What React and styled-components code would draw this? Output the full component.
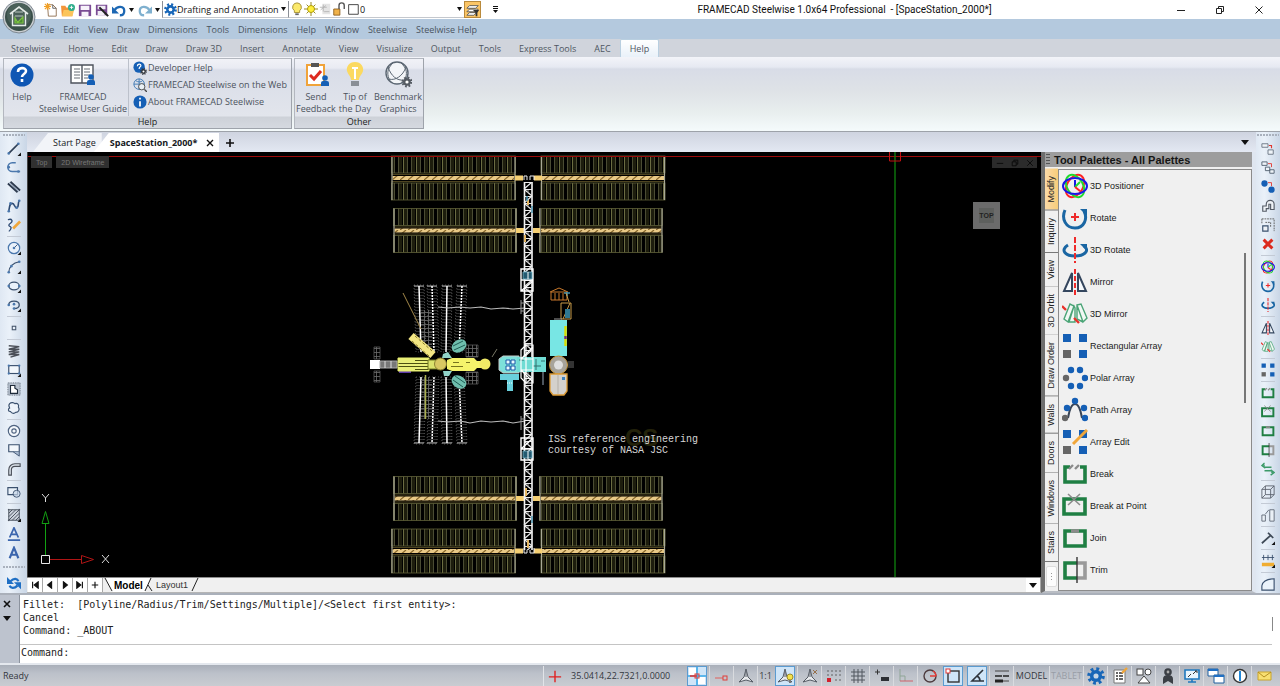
import React from 'react'
import styled, { createGlobalStyle, css } from 'styled-components'

const GlobalStyle = createGlobalStyle`
    * {
        box-sizing: border-box;
    }
    body {
        margin: 0;
        font-family: 'Open Sans', 'Noto Sans', sans-serif;
        font-size: 9px;
        color: #1e1e1e;
        background: #d3d8e2;
    }
    button, select, input {
        font: inherit;
        color: inherit;
        margin: 0;
        padding: 0;
        border: none;
        background: none;
        outline: none;
        appearance: none;
    }
`

const Window = styled.div`
    position: relative;
    height: 100vh;
    display: flex;
    flex-direction: column;
    overflow: hidden;
`

/* ---------- title bar ---------- */

const TitleBar = styled.header`
    height: 19px;
    flex: none;
    display: flex;
    align-items: center;
    padding: 0 2px 0 42px;
    background: white;
`

const QuickAccess = styled.div`
    display: flex;
    align-items: center;
    height: 18px;
`

const QuickButton = styled.button`
    width: ${({ $width }) => $width || '17px'};
    height: 17px;
    display: flex;
    align-items: center;
    justify-content: center;
    ${({ $on }) =>
        $on &&
        css`
            background: #fbc566;
            border: 1px solid #b98a3c;
        `}
`

const Combo = styled.div`
    display: flex;
    align-items: center;
    width: ${({ $width }) => $width};
    height: 17px;
    padding: 0 1px;
    border-left: 1px solid #8b8f96;
    border-bottom: 1px solid #c4c8ce;

    svg {
        flex: none;
    }

    select {
        flex: 1;
        min-width: 0;
        height: 15px;
        color: #111;
    }
`

const AppTitle = styled.h1`
    flex: 1;
    margin: 0;
    padding-left: 18px;
    text-align: center;
    font-family: Roboto, 'Open Sans', sans-serif;
    font-size: 10px;
    font-weight: normal;
    color: #111;
    white-space: nowrap;
`

const WindowButton = styled.button`
    width: 39px;
    height: 19px;
    display: flex;
    align-items: center;
    justify-content: center;
`

const AppButton = styled.button`
    position: absolute;
    left: 2px;
    top: 0;
    width: 34px;
    height: 34px;
    z-index: 2;
`

/* ---------- menu and ribbon ---------- */

const MenuBar = styled.nav`
    height: 20px;
    flex: none;
    display: flex;
    align-items: center;
    gap: 9px;
    padding-left: 40px;
    background: #b4c9de;

    button {
        color: #4a5460;
    }
`

const RibbonTabs = styled.div`
    height: 18px;
    flex: none;
    display: flex;
    padding-left: 2px;
    background: #d0d4dc;
`

const RibbonTab = styled.button`
    height: 18px;
    padding: 0 9px;
    color: #4e5661;
    white-space: nowrap;
    ${({ $active }) =>
        $active &&
        css`
            background: linear-gradient(#ffffff, #e9f1f9);
            border: 1px solid #b9cfe0;
            border-bottom: none;
            border-radius: 2px 2px 0 0;
        `}
`

const Ribbon = styled.section`
    height: 75px;
    flex: none;
    display: flex;
    gap: 2px;
    padding: 1px 3px 2px;
    border-bottom: 1px solid #9da2a9;
    background: linear-gradient(#f3f4f9 0, #e6e9f2 10px, #d8dce7 12px, #dfe3e7 35px, #e8eeee 55px, #f4fafb 73px);
`

const RibbonPanel = styled.section`
    display: flex;
    flex-direction: column;
    height: 71px;
    border: 1px solid #b3b7bf;
    border-right-color: #9ea3ab;
    border-bottom-color: #9ea3ab;
    background: linear-gradient(#f1f2f7 0, #e9ebf3 9px, #d9dde8 11px, #e2e5ec 57px, #cdd1d8 58px, #d5d9e0);
`

const PanelBody = styled.div`
    display: flex;
    height: 57px;
    color: #4c535d;
`

const PanelName = styled.h2`
    margin: 0;
    font-size: 9px;
    font-weight: normal;
    line-height: 12px;
    text-align: center;
    color: #1c1f24;
`

const BigButton = styled.button`
    width: ${({ $width }) => $width};
    display: flex;
    flex-direction: column;
    align-items: center;
    gap: 2px;
    padding-top: 2px;
    line-height: 12px;
    white-space: nowrap;
`

const LinkList = styled.ul`
    list-style: none;
    margin: 0 0 0 2px;
    padding: 0 4px;
    border-left: 1px solid #bcc1cb;
`

const RibbonLink = styled.a`
    display: flex;
    align-items: center;
    gap: 1px;
    height: 17px;
    color: inherit;
    text-decoration: none;
    white-space: nowrap;
`

/* ---------- work area ---------- */

const Workspace = styled.div`
    flex: 1;
    min-height: 0;
    display: flex;
`

const ToolStrip = styled.aside`
    width: ${({ $width }) => $width};
    flex: none;
    overflow: hidden;
    display: flex;
    flex-direction: column;
    align-items: center;
    background: linear-gradient(90deg, #dfe8f3, #eaf1f9 35%, #c9d6e6);
`

const Grip = styled.div`
    width: 22px;
    height: ${({ $tall }) => ($tall ? '11px' : '7px')};
    flex: none;
    background: radial-gradient(circle at 1px 1px, #a9b1bd 1px, transparent 1px) 0 center / 3px 3px repeat-x;
`

const StripRule = styled.hr`
    width: 14px;
    height: 4px;
    flex: none;
    margin: 0;
    border: none;
    background: linear-gradient(#c3cad5, #c3cad5) center / 100% 1px no-repeat;
`

const ToolButton = styled.button`
    height: 19px;
    flex: none;
    display: flex;
    align-items: center;
    justify-content: center;
`

const Middle = styled.div`
    flex: 1;
    min-width: 0;
    display: flex;
    flex-direction: column;
`

const DocTabs = styled.div`
    height: 20px;
    flex: none;
    display: flex;
    align-items: flex-end;
    padding: 0 5px 0 6px;
    background: linear-gradient(#cfd4e0, #e3e8f2);
`

const DocTab = styled.div`
    height: 19px;
    display: flex;
    align-items: center;
    gap: 7px;
    white-space: nowrap;
    background: ${({ $active }) => ($active ? '#ffffff' : '#f2f4f8')};
    clip-path: polygon(15px 0, 100% 0, 100% 100%, 0 100%);
    padding: ${({ $active }) => ($active ? '0 3px 0 16px' : '0 6px 0 20px')};
    margin-left: ${({ $active }) => ($active ? '-8px' : '0')};
    font-weight: ${({ $active }) => ($active ? 'bold' : 'normal')};
    color: #16181c;
`

const PlainButton = styled.button`
    display: flex;
    align-items: center;
    justify-content: center;
    width: 12px;
    height: 19px;
`

const TabFiller = styled.div`
    flex: 1;
    padding-left: 5px;
`

const Panes = styled.div`
    flex: 1;
    min-height: 0;
    display: flex;
`

const CanvasPane = styled.main`
    flex: 1;
    min-width: 0;
    display: flex;
    flex-direction: column;
`

const Viewport = styled.div`
    position: relative;
    flex: 1;
    min-height: 0;
    background: black;
    border-left: 1px solid #444;

    > svg {
        display: block;
        width: 100%;
        height: 100%;
    }
`

const ViewTags = styled.div`
    position: absolute;
    left: 3px;
    top: 4px;
    display: flex;
    gap: 4px;

    button {
        height: 12px;
        padding: 0 5px;
        font-family: 'Liberation Sans', Arial, sans-serif;
        font-size: 7px;
        color: #777;
        background: #303030;
    }
`

const ViewButtons = styled.div`
    position: absolute;
    right: 4px;
    top: 5px;
    display: flex;
    background: #2b2b2b;

    button {
        width: 15px;
        height: 11px;
        display: flex;
        align-items: center;
        justify-content: center;
    }
`

const ViewCube = styled.button`
    && {
        position: absolute;
        right: 41px;
        top: 50px;
        width: 27px;
        height: 27px;
        font-family: 'Liberation Sans', Arial, sans-serif;
        font-size: 7px;
        font-weight: bold;
        color: #222;
        background: #5e605e;
        border: 6px solid #6b6b6b;
        display: flex;
        align-items: center;
        justify-content: center;
    }
`

const LayoutTabs = styled.div`
    height: 16px;
    flex: none;
    display: flex;
    align-items: stretch;
    padding-left: 1px;
    font-family: 'Liberation Sans', Arial, sans-serif;
    background: #f0f0f0;
    border-top: 1px solid #8d8d8d;
    border-bottom: 1px solid #b5b5b5;
`

const NavButton = styled.button`
    width: 15px;
    display: flex;
    align-items: center;
    justify-content: center;
    background: white;
    border-right: 1px solid #a8a8a8;
`

const LayoutTab = styled.button`
    padding: 0 1px;
    font-weight: ${({ $active }) => ($active ? 'bold' : 'normal')};
    font-size: ${({ $active }) => ($active ? '10px' : '9px')};
    color: ${({ $active }) => ($active ? '#000' : '#333')};
    background: ${({ $active }) => ($active ? '#fff' : 'none')};
`

/* ---------- tool palettes ---------- */

const Palette = styled.aside`
    width: 215px;
    flex: none;
    display: flex;
    flex-direction: column;
    border-left: 4px solid #6e6e6e;
    border-right: 4px solid #dfe6f0;
    border-bottom: 2px solid #b9bdc4;
    font-family: 'Liberation Sans', Arial, sans-serif;
    background: #f0f0f0;
`

const PaletteTitle = styled.h2`
    height: 15px;
    flex: none;
    display: flex;
    gap: 4px;
    margin: 0;
    padding-left: 1px;
    font-size: 11px;
    line-height: 16px;
    color: #151515;
    background: #9d9d9d;

    &::before {
        content: '';
        width: 4px;
        margin: 2px 0;
        background: repeating-linear-gradient(#555 0 1px, transparent 1px 3px);
    }
`

const PaletteBody = styled.div`
    flex: 1;
    min-height: 0;
    display: flex;
    padding-top: 2px;
`

const PaletteTabs = styled.div`
    width: 13px;
    flex: none;
    display: flex;
    flex-direction: column;
`

const PaletteTab = styled.button`
    width: 13px;
    flex: none;
    padding: 7px 0;
    writing-mode: vertical-rl;
    transform: rotate(180deg);
    line-height: 13px;
    white-space: nowrap;
    border-top: 1px solid #777;
    background: ${({ $active }) => ($active ? 'linear-gradient(90deg, #f7cd79, #fbd9a8)' : '#f0f0f0')};
    color: #222;
`

const MoreTabs = styled.button`
    width: 11px;
    height: 24px;
    margin: 4px 1px;
    display: flex;
    align-items: center;
    justify-content: center;
    background: #fcfcfc;
    border: 1px solid #ddd;
    border-radius: 2px;
`

const PaletteList = styled.ul`
    flex: 1;
    min-width: 0;
    list-style: none;
    margin: 0;
    padding: 0 0 0 3px;
    border: 1px solid #8b8b8b;
    overflow: hidden;
`

const PaletteScroll = styled.div`
    width: 2px;
    height: 150px;
    margin: 84px 6px 0 -8px;
    background: #777;
    z-index: 1;
`

const PaletteItem = styled.button`
    display: flex;
    align-items: center;
    gap: 2px;
    height: 32px;
    color: #1a1a1a;
`

/* ---------- command line and status ---------- */

const CommandArea = styled.section`
    height: 70px;
    flex: none;
    display: flex;
    border-top: 2px solid #aab0ba;
    font-family: 'DejaVu Sans Mono', 'Liberation Mono', monospace;
    font-size: 10px;
    color: #222;
    background: white;
`

const CommandSide = styled.div`
    width: 20px;
    flex: none;
    display: flex;
    flex-direction: column;
    align-items: flex-start;
    padding: 5px 3px;
    gap: 7px;
    background: #bdc3ce;
    border-right: 1px solid #8c939e;

    button {
        display: flex;
    }
`

const CommandMain = styled.div`
    flex: 1;
    min-width: 0;
`

const Log = styled.pre`
    height: 50px;
    margin: 0;
    padding: 3px 0 0 3px;
    font: inherit;
    line-height: 13px;
    border-bottom: 1px solid #c4c4c4;
`

const Prompt = styled.label`
    display: flex;
    height: 15px;
    padding-left: 1px;
    line-height: 15px;

    input {
        flex: 1;
    }
`

const LogScroll = styled.div`
    width: 1px;
    height: 14px;
    margin: 22px 7px 0 0;
    background: #888;
`

const StatusBar = styled.footer`
    height: 23px;
    flex: none;
    display: flex;
    align-items: center;
    padding-right: 5px;
    color: #33373d;
    border-top: 2px solid #e4e8ee;
    background: linear-gradient(#a9afb9, #bcc1ca 40%, #c9ccd1);
`

const Ready = styled.span`
    flex: 1;
    padding-left: 3px;
`

const Coordinates = styled.div`
    width: 142px;
    height: 20px;
    display: flex;
    align-items: center;
    gap: 9px;
    padding-left: 4px;
    border-left: 1px solid #e2e4e8;
`

const StatusButton = styled.button`
    width: ${({ $width }) => $width || '24px'};
    height: 20px;
    display: flex;
    align-items: center;
    justify-content: center;
    color: ${({ $dim }) => ($dim ? '#989da6' : 'inherit')};
    border-left: 1px solid ${({ $on }) => ($on ? '#5b9bd0' : '#d9dbdf')};
    ${({ $on }) =>
        $on &&
        css`
            width: 20px;
            margin: 0 2px;
            border: 1px solid #5b9bd0;
            background: #cfe5f8;
        `}

    svg {
        flex: none;
    }
`

/* ---------- icons ---------- */

const BLUE = '#155fb5'
const STEEL = '#4b78ad'
const GREEN = '#1f7f43'
const INK = '#33363c'

const dots = (points, color = BLUE, r = 1.5) => points.map(([x, y]) => <circle key={`${x}-${y}`} cx={x} cy={y} r={r} fill={color} stroke='none' />)

const corner = <path d='M16 12v4h-4z' fill='#111' stroke='none' />

const strip = {
    line: (
        <>
            <path d='M2 13L13 2' stroke='#2f3f55' strokeWidth='2' />
            {dots([[2, 13], [13, 2]], STEEL)}
            {corner}
        </>
    ),
    polyline: (
        <>
            <path d='M10 2H6a5 5 0 0 0 0 10h9' stroke={STEEL} strokeWidth='1.8' />
            {dots([[13, 12], [2, 7]], STEEL)}
        </>
    ),
    multiline: (
        <>
            <path d='M1 4l11 10M4 2l11 10' stroke='#2d3a4e' strokeWidth='2' />
            <path d='M2.5 3l11 10' stroke='#8193ab' />
        </>
    ),
    spline: (
        <>
            <path d='M2 14C3 8 3 5 6 5s2 5 5 5 1-6 3-8' stroke='#2d4a73' strokeWidth='1.8' />
            {dots([[2, 14], [4, 5], [11, 10], [14, 2]], STEEL)}
        </>
    ),
    sketch: (
        <>
            <path d='M1 2c5-2 6 2 3 4s-2 3 0 4-1 5-2 5' stroke='#2d4a73' strokeWidth='1.5' />
            <path d='M7 12l8-8' stroke='#f0a63a' strokeWidth='3' />
        </>
    ),
    circle: (
        <>
            <circle cx='8' cy='8' r='6.5' stroke={STEEL} fill='#e9f1fa' strokeWidth='1.4' />
            <path d='M8 8l4-4' stroke='#2d4a73' />
            {dots([[8, 8]], STEEL)}
            {corner}
        </>
    ),
    arc: (
        <>
            <path d='M2 14C2 8 7 3 14 2' stroke='#3a506e' strokeWidth='1.4' />
            {dots([[2, 14], [5, 7], [14, 2]], STEEL)}
            {corner}
        </>
    ),
    ellipse: (
        <>
            <ellipse cx='8' cy='8' rx='6' ry='4.5' stroke='#3a506e' fill='#e9f1fa' strokeWidth='1.4' />
            {dots([[2, 8], [14, 8]], STEEL)}
            {corner}
        </>
    ),
    ellipseArc: (
        <>
            <path d='M2 8c0-6 12-6 12 0 0 3-3 4-6 4' stroke='#3a506e' strokeWidth='1.5' />
            {dots([[2, 8], [8, 12], [8, 7]], STEEL)}
            {corner}
        </>
    ),
    point: <rect x='6' y='6' width='4' height='4' fill='#e9f1fa' stroke='#44546a' strokeWidth='1.2' />,
    helix: <path d='M2 2l12 1-12 3 12 0-12 3 12 0-12 3 12 0-10 3' stroke='#4a4f58' strokeWidth='1.6' />,
    rect: (
        <>
            <rect x='2' y='3' width='12' height='9' fill='#f2f7fc' stroke='#3a506e' strokeWidth='1.3' />
            {dots([[2, 3], [14, 3], [2, 12], [14, 12]], STEEL, 1.3)}
            {corner}
        </>
    ),
    region: (
        <>
            <rect x='1' y='1' width='14' height='14' fill='#b6c0cd' stroke='#56616f' strokeDasharray='1 1' />
            <path d='M4 4h5v3l3 2v4H4z' fill='#fff' stroke='#1e2a3a' strokeWidth='1.3' />
        </>
    ),
    cloud: <path d='M3 3c2-2 5-1 6 0 3-1 5 1 4 4 2 3 0 6-3 6-2 2-5 1-6-1-3 0-3-3-1-4-1-2-1-4 0-5z' stroke='#3a506e' strokeWidth='1.3' fill='#edf3fa' />,
    donut: (
        <>
            <circle cx='8' cy='8' r='6.5' stroke='#4f6380' fill='#f3f7fb' strokeWidth='1.3' />
            <circle cx='8' cy='8' r='2.5' stroke='#4f6380' strokeWidth='1.3' />
        </>
    ),
    wipeout: (
        <>
            <path d='M2 2h12v8H2z' fill='#f3f7fb' stroke='#3a506e' strokeWidth='1.3' />
            <path d='M7 10l7 5v-5' fill='#a9bad0' stroke='#3a506e' />
        </>
    ),
    trace: <path d='M2 15V9c0-4 3-7 7-7h6v3H9c-3 0-4 2-4 4v6z' fill='#dfe6ee' stroke='#4a4f58' strokeWidth='1.3' />,
    boundary: (
        <>
            <path d='M1 3h11v8H1z' fill='#e8f0f9' stroke='#3a506e' strokeWidth='1.3' />
            <circle cx='11' cy='10' r='4' fill='#c7d6e8' fillOpacity='.7' stroke='#3a506e' />
        </>
    ),
    hatch: (
        <>
            <rect x='2' y='2' width='12' height='12' fill='#ccd3dc' />
            <path d='M2 6l4-4M2 10l8-8M2 14L14 2M6 14l8-8M10 14l4-4M1 2h14M2 1v14M14 1v14M1 14h14' stroke='#3e4754' />
            {corner}
        </>
    ),
    mtext: <path d='M1 15h14M3 12L8 1l5 11M5 8.5h6' stroke='#3b65ad' strokeWidth='2' />,
    text: <path d='M3 14L8 2l5 12M5 10h6' stroke='#3b65ad' strokeWidth='2.4' />,
    refresh: (
        <>
            <path d='M4 6c4-4 8-3 9 0M12 11c-4 4-8 3-9 0' stroke='#1f6fc4' strokeWidth='2.6' />
            <path d='M0 1v8h8zM16 15V7H8z' fill='#1f6fc4' stroke='none' />
        </>
    ),
    copy: (
        <>
            <path d='M1 2h7v4H1z M8 9h6v5H8z' fill='#eef3f8' stroke='#66717f' />
            <path d='M9 4h3v3' stroke='#e2342c' strokeWidth='1.3' />
        </>
    ),
    copyMany: (
        <>
            <path d='M1 1h6v4H1zM5 7h5v4H5zM10 10h5v4h-5z' fill='#eef3f8' stroke='#4c5a6b' />
            <path d='M8 3h4v4' stroke='#e2342c' />
        </>
    ),
    move: (
        <>
            {dots([[4, 4], [12, 11]], BLUE, 3.6)}
            <path d='M8 3h4v4' stroke='#e2342c' />
        </>
    ),
    offset: <path d='M2 14V8h4V6a4 4 0 0 1 9 0v6h-4V6H9v5H6v3z' fill='#eef2f6' stroke='#545b66' strokeWidth='1.3' />,
    stretch: (
        <>
            <path d='M1 1h14v14M1 1v6M5 5h6v6' stroke='#555' strokeDasharray='2 1' />
            <path d='M2 9h6v6H2z' fill='#eef2f6' stroke='#3a506e' strokeWidth='1.3' />
        </>
    ),
    erase: <path d='M3 3l10 10M13 3L3 13' stroke='#dc2a1e' strokeWidth='3.4' />,
    swap: <path d='M12 6H4a2 2 0 0 1 0-3M4 10h8a2 2 0 0 1 0 3M4 1L1 4l4 3M11 9l4 3-4 3' stroke='#3c9a69' strokeWidth='1.6' />,
    box3d: <path d='M1 5h10v10H1zM5 1h10v10H5zM1 5l4-4M11 5l4-4M11 15l4-4M1 15l4-4' stroke='#59606b' />,
    scale: <path d='M1 8h4v7H1zM10 2h5v13h-5zM5 7l4-5' stroke='#5b6674' fill='#eaf0f6' />,
    explode: (
        <>
            <path d='M1 14L11 5M8 2l6 6' stroke='#3f4a57' strokeWidth='2' />
            {corner}
        </>
    ),
    measure: (
        <>
            <path d='M1 4h14M3 1v6M8 1v6M13 1v6' stroke='#3a506e' />
            <rect x='1' y='10' width='14' height='4' fill='#f0ad32' />
            {corner}
        </>
    ),
    fillet: <path d='M1 15V10C2 5 6 2 15 2v13z' fill='#eaf2fa' stroke='#3a506e' strokeWidth='1.3' />
}

const edit = {
    positioner: (
        <>
            <ellipse cx='13' cy='13' rx='8' ry='12' transform='rotate(30 13 13)' stroke='#f22' strokeWidth='2' />
            <ellipse cx='13' cy='13' rx='8' ry='12' transform='rotate(-30 13 13)' stroke='#1fdc2c' strokeWidth='2' />
            <ellipse cx='13' cy='13' rx='12' ry='8' stroke='#1818e6' strokeWidth='2' />
            <path d='M13 7v7' stroke='#1818e6' strokeWidth='2' />
            <path d='M13 14l5-5' stroke='#1fdc2c' strokeWidth='2' />
            <path d='M13 14l5 4' stroke='#f22' strokeWidth='2' />
        </>
    ),
    rotate: (
        <>
            <path d='M3 5C-1 14 4 23 13 23S26 14 22 6' stroke='#1a66a3' strokeWidth='3' />
            <path d='M18 4h7v7z' fill='#1a66a3' />
            <path d='M13 8v8M9 12h8' stroke='#ee2a2a' strokeWidth='2' />
        </>
    ),
    rotate3d: (
        <>
            <path d='M6 8c-8 5-3 11 7 11s15-6 9-10' stroke='#1a66a3' strokeWidth='3' />
            <path d='M18 7h7v7z' fill='#1a66a3' />
            <path d='M13 0v26' stroke='#ee2a2a' strokeWidth='2' strokeDasharray='6 2' />
        </>
    ),
    mirror: (
        <>
            <path d='M10 4v18H2zM16 4v18h8z' stroke='#34465e' strokeWidth='2' fill='#f6fafd' />
            <path d='M13 0v26' stroke='#ee2a2a' strokeWidth='2' strokeDasharray='5 2' />
        </>
    ),
    mirror3d: (
        <>
            <path d='M2 18L8 3l4 2-6 16zM7 21l5-16 1 2v14zM15 4l4-1 6 14-4 4zM15 4v14l6 3' stroke='#4aa476' strokeWidth='1.4' fill='#f1f8f4' />
            <path d='M0 5l4 4M12 17l5 5' stroke='#e8322a' strokeWidth='2.4' />
        </>
    ),
    rectArray: (
        <path d='M1 1h8v8H1zM17 1h8v8h-8zM17 17h8v8h-8z' fill={BLUE} />
    ),
    arrayEdit: (
        <>
            <path d='M1 1h8v8H1zM17 1h8v8h-8zM17 17h8v8h-8z' fill={BLUE} />
            <path d='M11 15L25 1' stroke='#f0a63a' strokeWidth='3' />
        </>
    ),
    polarArray: (
        <>
            {dots([[9, 5], [18, 5], [23, 13], [18, 21], [9, 21]], BLUE, 3.2)}
            {dots([[4, 13]], '#666', 3.2)}
        </>
    ),
    pathArray: (
        <>
            <path d='M6 21c1-6 3-14 7-14s6 8 7 14' stroke='#3a4658' strokeWidth='2' />
            {dots([[13, 4], [5, 11], [22, 11], [23, 21]], BLUE, 3.2)}
            {dots([[3, 21]], '#666', 3.2)}
        </>
    ),
    breakIt: (
        <>
            <path d='M8 6H3v15h20V6h-5' stroke={GREEN} strokeWidth='3.6' />
            <path d='M7 8l4-4M13 8l4-4' stroke='#8b8b8b' strokeWidth='2.4' />
        </>
    ),
    breakPoint: (
        <>
            <path d='M2 6h21v15H2z' stroke={GREEN} strokeWidth='3.6' />
            <path d='M6 1l12 11M18 1L6 12' stroke='#8b8b8b' strokeWidth='1.6' />
        </>
    ),
    join: (
        <>
            <path d='M3 6h20v15H3z' stroke={GREEN} strokeWidth='3.6' />
            <path d='M9 6h8' stroke='#8b8b8b' strokeWidth='3.6' />
        </>
    ),
    trim: (
        <>
            <path d='M15 6h8v15h-8' stroke='#9a9a9a' strokeWidth='3.6' />
            <path d='M15 6H3v15h12' stroke={GREEN} strokeWidth='3.6' />
            <path d='M15 0v26' stroke='#333' strokeWidth='1.4' />
        </>
    )
}

const Glyph = ({ name, size = 14 }) => {
    const isEdit = name in edit
    return (
        <svg width={size} height={size} viewBox={isEdit ? '0 0 26 26' : '0 0 16 16'} fill='none' aria-hidden='true'>
            {isEdit ? edit[name] : strip[name]}
            {(name === 'rectArray' || name === 'arrayEdit') && <path d='M1 17h8v8H1z' fill='#666' />}
        </svg>
    )
}

const gear = (cx, cy, r, color, hole = 'white') => (
    <>
        <circle cx={cx} cy={cy} r={r * 0.85} stroke={color} strokeWidth={r * 0.5} strokeDasharray={`${r * 0.334}`} />
        <circle cx={cx} cy={cy} r={r * 0.76} fill={color} />
        <circle cx={cx} cy={cy} r={r * 0.32} fill={hole} />
    </>
)

const person = (x, y) => (
    <>
        <circle cx={x} cy={y} r='2.8' fill={BLUE} />
        <path d={`M${x - 4} ${y + 8}v-3q0-2 2-2h4q2 0 2 2v3z`} fill={BLUE} />
    </>
)

const Svg = ({ w = 16, size = w, children }) => (
    <svg width={size} height={size} viewBox={`0 0 ${w} ${w}`} fill='none' aria-hidden='true'>
        {children}
    </svg>
)

const Caret = () => (
    <svg width='7' height='4' viewBox='0 0 7 4' aria-hidden='true'>
        <path d='M1 0h5L3.5 4z' fill='#111' />
    </svg>
)

const BigCaret = () => (
    <svg width='8' height='5' viewBox='0 0 8 5' aria-hidden='true'>
        <path d='M0 0h8L4 5z' fill='#111' />
    </svg>
)

const quickIcons = {
    New: (
        <>
            <path d='M4 2h6l4 4v9H5z' fill='#fff' stroke='#8b6a4a' />
            <path d='M10 2v4h4' stroke='#555' />
            <path d='M4 0v8M0 4h8M1 1l6 6M7 1L1 7' stroke='#f2a024' strokeWidth='1.4' />
        </>
    ),
    Open: (
        <>
            <path d='M0 3h5l1 2h7v10H1z' fill='#f2953a' />
            <path d='M3 8h12l-2 7H1z' fill='#fbc55c' />
            <circle cx='12' cy='5' r='4' fill='#2fae8c' />
            <path d='M10 5h4M12 3v4' stroke='#fff' />
        </>
    ),
    Save: (
        <>
            <path d='M1 2h14v13H1z' fill='#7a4b94' />
            <path d='M3 3h10v5H3zM4 10h8v5H4z' fill='#f7f2fb' />
        </>
    ),
    'Save as': (
        <>
            <path d='M1 2h13v12H1z' fill='#7a4b94' />
            <path d='M3 3h9v4H3zM3 9h8v5H3z' fill='#f1edf5' />
            <path d='M5 5l10 10' stroke='#222' strokeWidth='2.4' />
        </>
    )
}

const leftTools = [
    ['line', 'polyline', 'multiline', 'spline', 'sketch'],
    ['circle', 'arc', 'ellipse', 'ellipseArc'],
    ['point'],
    ['helix', 'rect', 'region', 'cloud'],
    ['donut', 'wipeout', 'trace'],
    ['boundary'],
    ['hatch', 'mtext', 'text']
]

const rightTools = [
    ['copy', 'copyMany', 'move', 'offset', 'stretch', 'erase'],
    ['positioner', 'rotate', 'rotate3d'],
    ['mirror', 'mirror3d'],
    ['rectArray'],
    ['breakIt', 'breakPoint', 'join', 'trim', 'swap'],
    ['box3d'],
    ['scale'],
    ['explode'],
    ['measure'],
    ['fillet']
]

const paletteItems = [
    ['positioner', '3D Positioner'],
    ['rotate', 'Rotate'],
    ['rotate3d', '3D Rotate'],
    ['mirror', 'Mirror'],
    ['mirror3d', '3D Mirror'],
    ['rectArray', 'Rectangular Array'],
    ['polarArray', 'Polar Array'],
    ['pathArray', 'Path Array'],
    ['arrayEdit', 'Array Edit'],
    ['breakIt', 'Break'],
    ['breakPoint', 'Break at Point'],
    ['join', 'Join'],
    ['trim', 'Trim']
]

const menus = ['File', 'Edit', 'View', 'Draw', 'Dimensions', 'Tools', 'Dimensions', 'Help', 'Window', 'Steelwise', 'Steelwise Help']
const ribbonTabs = ['Steelwise', 'Home', 'Edit', 'Draw', 'Draw 3D', 'Insert', 'Annotate', 'View', 'Visualize', 'Output', 'Tools', 'Express Tools', 'AEC', 'Help']
const paletteTabs = ['Modify', 'Inquiry', 'View', '3D Orbit', 'Draw Order', 'Walls', 'Doors', 'Windows', 'Stairs']

const layoutNav = [
    ['First layout', 'M2 1v8M9 1v8L4 5z'],
    ['Previous layout', 'M7 1v8L2 5z'],
    ['Next layout', 'M3 1v8l5-4z'],
    ['Last layout', 'M8 1v8M1 1v8l5-4z'],
    ['Add layout', 'M5 1v8M1 5h8']
]

const ToolGroups = ({ groups }) =>
    groups.map((group, i) => (
        <React.Fragment key={group[0]}>
            {i > 0 && <StripRule />}
            {group.map((name) => (
                <ToolButton key={name} aria-label={name}>
                    <Glyph name={name} />
                </ToolButton>
            ))}
        </React.Fragment>
    ))

/* ---------- status icons ---------- */

const compass = (
    <>
        <path d='M9 2l2 8 5 5-7-2-7 2 5-5z' stroke='#555b64' fill='#e8eaed' strokeLinejoin='round' />
        <path d='M9 5v5' stroke='#555b64' />
    </>
)

const statusIcons = [
    { label: 'Snap marker', on: true, art: <><path d='M1 1h7v7H1zM10 10h7v7h-7z' fill='#fff' /><path d='M9 0v18M0 9h18' stroke='#38a8e8' strokeWidth='1.6' /><path d='M2 9h7' stroke='#e23a36' strokeWidth='1.6' /><rect x='7' y='7' width='4' height='4' stroke='#e23a36' /></> },
    { label: 'Entity snap', art: <><path d='M2 11h8' stroke='#e0605c' /><rect x='10' y='9' width='4' height='4' stroke='#e03c38' /></> },
    { label: 'Annotation', art: compass },
    { label: 'Scale', text: '1:1', width: '16px' },
    { label: 'Annotation visibility', on: true, art: <>{compass}<circle cx='14' cy='10' r='3' fill='#f5e24a' stroke='#9a8b2b' /><path d='M13 13h2v3h-2z' fill='#777' /></> },
    { label: 'Auto scale', art: <>{compass}<path d='M12 3l4 4M16 3l-4 4' stroke='#96704a' /></> },
    { label: 'Snap', art: <>{dots([[7, 4], [11, 4], [15, 4], [7, 8], [11, 8], [15, 8], [11, 13], [15, 13], [3, 4], [3, 8]], '#555', 0.8)}<rect x='2' y='11' width='4' height='4' fill='#d3202c' /></> },
    { label: 'Grid', art: <path d='M5 2v14M9 2v14M13 2v14M2 5h14M2 9h14M2 13h14' stroke='#50565f' /> },
    { label: 'Dynamic input', art: <><path d='M2 5h5M4.5 2.5v5' stroke='#333' /><rect x='8' y='10' width='8' height='4' fill='#2c2f34' /></> },
    { label: 'Ortho', art: <><path d='M3 2v12M3 9h5v5' stroke='#8fa596' /><path d='M3 14h13' stroke='#d0606a' /></> },
    { label: 'Polar', art: <><circle cx='9' cy='9' r='6' stroke='#4d3b3e' strokeWidth='1.4' /><path d='M9 9h6M15 9a6 6 0 0 0-3-5' stroke='#e23a36' strokeWidth='1.4' /></> },
    { label: 'Entity snap box', on: true, art: <><rect x='4' y='4' width='11' height='11' stroke='#333' strokeWidth='1.4' /><rect x='2' y='2' width='4' height='4' fill='#fff' stroke='#e23a36' /></> },
    { label: 'Tracking', on: true, art: <path d='M15 3L4 14h12M9 9c2 1 3 3 3 5' stroke='#2f353d' strokeWidth='1.6' /> },
    { label: 'Lineweight', art: <><path d='M2 4h14' stroke='#444' /><path d='M2 9h7M10 9h6' stroke='#222' strokeWidth='1.6' /><path d='M2 14h8' stroke='#222' strokeWidth='3' /><path d='M10 14h6' stroke='#444' /></> },
    { label: 'Model', text: 'MODEL', width: '36px' },
    { label: 'Tablet', text: 'TABLET', width: '34px', dim: true },
    { label: 'Settings', art: gear(9, 9, 8, '#1766b8', '#c6d6e6') },
    { label: 'Properties', art: <><path d='M3 3h11v13H3z' fill='#fff' stroke='#777' /><path d='M5 6h2M8 6h4M5 9h2M8 9h4M5 12h2M8 12h4' stroke='#333' strokeWidth='1.4' /><path d='M11 6l5-5' stroke='#f0a63a' strokeWidth='2.4' /></> },
    { label: 'Shapes', art: <><rect x='2' y='2' width='6' height='6' fill='#fff' stroke='#444' /><circle cx='13' cy='5' r='3' fill='#fff' stroke='#444' /><path d='M9 9l6 7H3z' fill='#fff' stroke='#444' /></> },
    { label: 'Badge', art: <><circle cx='9' cy='5' r='3.8' fill='#3b3f45' /><circle cx='9' cy='5' r='1.4' fill='#aaa' /><path d='M4 17v-5q0-4 5-4t5 4v5l-5-3z' fill='#3b3f45' /></> },
    { label: 'Screen', art: <><path d='M2 3h14v9H2z' fill='#e9f4fc' stroke='#1f78be' strokeWidth='1.6' /><path d='M5 10l3-3M13 4l-3 3M12 4h2v2' stroke='#333' /><path d='M9 12v3M5 15h8' stroke='#1f78be' strokeWidth='1.6' /></> },
    { label: 'Windows', art: <><path d='M1 2h10v7H1z' fill='#fff' stroke='#1f5f9e' /><path d='M7 8h10v8H7z' fill='#fff' stroke='#1f5f9e' /><path d='M1 3h10M7 9h10' stroke='#1f6fc4' strokeWidth='2' /></> },
    { label: 'Info', art: <><circle cx='9' cy='9' r='6.5' fill='#fff' stroke='#333' strokeWidth='1.4' /><path d='M9 4v10' stroke='#1f87d8' strokeWidth='2' /></> },
    { label: 'Mail', art: <><path d='M3 5h13v8H3z' fill='#f8df72' stroke='#c9a42c' /><path d='M3 5l6 5 7-5' stroke='#b58f20' /></> }
]

/* ---------- drawing ---------- */

// one solar wing: two striped blankets with a twisted mast between them
const Wing = ({ x, y, width = 124 }) => (
    <g>
        <rect x={x} y={y} width={width} height='17' fill='url(#blanket)' stroke='#5f6038' strokeWidth='.8' />
        <rect x={x} y={y + 27} width={width} height='17' fill='url(#blanket)' stroke='#5f6038' strokeWidth='.8' />
        <rect x={x + 1} y={y + 20} width={width - 2} height='4' fill='url(#mast)' />
        <path d={`M${x} ${y + 18.5}h${width}M${x} ${y + 25.5}h${width}`} stroke='#4e4420' />
        <path d={`M${x + 0.5} ${y}v44M${x + width - 0.5} ${y}v44`} stroke='#a9a996' strokeWidth='1.2' />
    </g>
)

const arrayStrips = [
    [419, 421],
    [432, 434],
    [447, 446],
    [462, 459]
]

const Station = () => (
    <svg viewBox='28 152 1013 425' preserveAspectRatio='xMidYMid meet' fill='none'>
        <defs>
            <pattern id='blanket' width='13' height='20' patternUnits='userSpaceOnUse'>
                <path d='M1 0h3v20H1zM9 0h3v20H9z' fill='#1d1d0d' />
                <path d='M.5 0v20' stroke='#6b6c42' />
                <path d='M4.5 0v20M8.5 0v20' stroke='#4b4c33' />
            </pattern>
            <pattern id='mast' width='8' height='5' patternUnits='userSpaceOnUse'>
                <path d='M0 0h8v5H0z' fill='#e8c987' />
                <path d='M0 5l6-5' stroke='#85652a' strokeWidth='1.2' />
            </pattern>
            <pattern id='truss' width='10' height='14' patternUnits='userSpaceOnUse' x='523' y='182'>
                <path d='M1.5 0v14M9 0v14' stroke='#f6f6f6' strokeWidth='1.6' />
                <path d='M1 7l8-7M1 .5h8M1 7.5h8M2 8l7 6' stroke='#ededed' strokeWidth='1.2' />
                <path d='M5 8v3' stroke='#999' />
            </pattern>
            <pattern id='ladder' width='8' height='3' patternUnits='userSpaceOnUse'>
                <path d='M0 1.5h8' stroke='#3c3c3c' strokeWidth='.8' />
            </pattern>
            <pattern id='hull' width='30' height='3' patternUnits='userSpaceOnUse'>
                <path d='M0 0h30v3H0z' fill='#eaf07c' />
                <path d='M0 .5h30' stroke='#4c5010' />
            </pattern>
            <pattern id='grid' width='4' height='4' patternUnits='userSpaceOnUse'>
                <path d='M0 .5h4M.5 0v4' stroke='#6d6d6d' strokeWidth='.8' />
            </pattern>
        </defs>

        <text x='625' y='446' fill='#23220a' fontFamily='Liberation Sans' fontSize='24' fontWeight='bold'>CS</text>

        {[156, 529].map((y) => (
            <g key={y}>
                <Wing x={391.5} y={y} />
                <Wing x={541} y={y} />
                <path d={`M515 ${y + 22}h8M534 ${y + 22}h8`} stroke='#f4cf74' strokeWidth='5' />
            </g>
        ))}
        {[208.5, 476.5].map((y) => (
            <g key={y}>
                <Wing x={393.5} y={y} width={123} />
                <Wing x={539.5} y={y} width={123} />
                <path d={`M516 ${y + 22}h8M533 ${y + 22}h7`} stroke='#f4cf74' strokeWidth='5' />
            </g>
        ))}

        {/* Russian segment arrays */}
        {arrayStrips.map(([outer, inner]) => (
            <g key={outer}>
                <path d={`M${outer - 5} 285h10l${inner - outer} 67h-10zM${inner - 5} 377h10l${outer - inner} 67h-10z`} fill='url(#ladder)' stroke='#666' strokeWidth='.8' strokeDasharray='1 2' />
                <path d={`M${outer - 5} 286h10M${outer - 5} 443h10`} stroke='#aaa' />
                <path d={`M${outer} 286L${inner} 352M${inner} 377L${outer} 443`} stroke='#fff' strokeWidth='1.5' strokeDasharray={outer % 2 ? 'none' : '2 1'} />
            </g>
        ))}
        <path d='M421 310h11v40h-11z M421 377h11v42h-11z' fill='url(#grid)' />
        <path d='M425.5 375v44' stroke='#aab04c' strokeWidth='1.5' />
        <path d='M374 347h6v12h-6zM374 371h6v11h-6zM466 345h12v12h-12zM466 372h12v12h-12z' fill='url(#grid)' stroke='#666' strokeWidth='.7' />
        <path d='M403 293l18 36' stroke='#a3884a' />
        <path d='M492 357l5-8' stroke='#776' />
        <path d='M438 307l10 1 12-1 10 1 11-1 10 2 12-1 10 1 12-1M438 421l10 1 12-1 10 2 11-2 10 1 12-1 10 2 12-2' stroke='#bbb' strokeWidth='1.2' />

        {/* truss */}
        <path d='M523 182h10v368h-10z' fill='url(#truss)' />
        <path d='M524 180v-4h3v4M530 180v-4h4v4M524 548v5h3v-3M530 550v3h4v-5' stroke='#eee' />
        <path d='M521 269h12v22h-12zM521 438h12v22h-12zM521 280h12M521 449h12M521 291l12-10M521 449l12-11' stroke='#fff' strokeWidth='1.4' />
        <path d='M523 272h9v7h-9zM523 451h9v7h-9z' fill='#235a70' stroke='#79b7cc' strokeWidth='.8' />
        <path d='M528 272v7M528 451v7' stroke='#fff' />
        <path d='M528 200v5M525 235v7M526 488v8M528 540v8' stroke='#e5b765' strokeWidth='2' />
        <path d='M532 206v7M527 196v5M532 516v7' stroke='#4e96b4' strokeWidth='1.5' />
        <path d='M521 300v14M521 416v14M521 303h4M521 311h4M521 419h4' stroke='#999' />

        {/* modules */}
        <path d='M370 360h10v9h-10z' fill='#fff' />
        <path d='M380 361h17v7h-17z' fill='#777' stroke='#aaa' />
        <path d='M385 361v7M391 361v7' stroke='#ddd' />
        <path d='M399 369h12v4h-12z' fill='#5d3aa8' />
        <path d='M398 358h31v13h-31z' fill='url(#hull)' stroke='#e8ee70' />
        <path d='M398 359h17v3h-17zM398 367h17v3h-17z' fill='#e9ef77' />
        <path d='M428 360h12v9h-12z' fill='#dbe36c' stroke='#6f7420' />
        <path d='M411 336l22 19' stroke='#f3e683' strokeWidth='8' />
        <path d='M415 336l17 15M412 341l17 15' stroke='#8a7a2a' strokeDasharray='3 2' />
        <circle cx='440.5' cy='364' r='6' fill='#d9c862' stroke='#8c8231' />
        <path d='M447 360l5-2h22l3 3h6v7h-6l-3 3h-22l-5-2z' fill='#f5f36b' />
        <path d='M453 362h6v1h-6zM451 366h12v1h-12zM466 362h4v1h-4z' fill='#75721d' />
        <circle cx='485' cy='364' r='5.5' fill='#f0ea66' />
        <ellipse cx='459' cy='346' rx='8' ry='6' transform='rotate(-35 459 346)' fill='#6fbfae' />
        <ellipse cx='459' cy='382' rx='8' ry='6' transform='rotate(35 459 382)' fill='#6fbfae' />
        <path d='M453 346l10-5M454 350l11-5M453 380l10 7M455 376l10 7' stroke='#1f5d54' />
        <path d='M443 354l5-2 4 6h-10zM443 371h9l-3 5h-5z' fill='#91d3c8' />
        <path d='M499 359l4-3h16v17h-16l-4-3z' fill='#7de0da' stroke='#c3cac9' />
        <path d='M506 360h4v4h-4zM511 360h4v4h-4zM506 366h4v4h-4zM511 366h4v4h-4z' fill='#e9fbff' stroke='#1b58a8' />
        <path d='M517 357h29v15h-29z' fill='#70dcd4' />
        <path d='M519 360h5M536 359v11M541 361h4M533 366h8' stroke='#316e6c' />
        <path d='M500 374h19v6h-6v11h-6v-11h-7z' fill='#69d0dc' />
        <path d='M507 383h5' stroke='#fff' strokeDasharray='1 1' />
        <path d='M521 350l5-5h7v38h-7l-5-5zM521 359h12M521 370h12M526 345v38M521 370l12 12M521 359l12-12' stroke='#fff' strokeWidth='1.2' />
        <path d='M543 372v13' stroke='#9ab' />
        <path d='M550 320h17v36h-17z' fill='#78e6e4' />
        <path d='M565.5 326v20' stroke='#d9dc00' strokeWidth='2.4' />
        <path d='M565.5 336v3' stroke='#6a2a80' strokeWidth='2.4' />
        <circle cx='558.5' cy='365' r='9' fill='#a7a39a' stroke='#c9983c' />
        <circle cx='558.5' cy='365' r='4.5' fill='#dedede' />
        <path d='M568 361h6v7h-6z' fill='#333' />
        <path d='M550 374h17v17l-3 4h-11l-3-4z' fill='#d4d1cc' stroke='#dc9a34' strokeWidth='1.3' />
        <path d='M558 375v19' stroke='#b5b0a8' />
        <rect x='562' y='377' width='3' height='3' fill='#3d7fbc' />
        <path d='M550 292l9-4 9 4M551 292v8h16v-8zM555 293v7M559 293v7M563 293v7' stroke='#c9792c' />
        <path d='M564 293h6M567 292v4' stroke='#3f8fae' strokeWidth='1.4' />
        <path d='M561 303h10v16h-10zM563 319l7-16M566 293l3 9' stroke='#c79a48' />
        <path d='M565 309h5v9h-5z' fill='#2f7892' />
        <path d='M554 319h8' stroke='#999' />

        <g fill='#d6d6d6' fontFamily='Liberation Mono' fontSize='10'>
            <text x='548' y='442'>ISS reference engIneering</text>
            <text x='548' y='453'>courtesy of NASA JSC</text>
        </g>

        {/* UCS icon */}
        <path d='M45.5 555v-32M42 523.5l3.5-12 3.5 12z' stroke='#12a012' />
        <path d='M50 559.5h32M81.5 555.5l12 4-12 4z' stroke='#b01515' />
        <path d='M41.5 555.5h8v8h-8z' stroke='#e6e6e6' />
        <path d='M42 494l3.5 4 3.5-4M45.5 498v4M102 555l7 8M109 555l-7 8' stroke='#ddd' />

        {/* crosshair */}
        <path d='M28 156.5h1013' stroke='#9c0a0a' />
        <path d='M895 152v425' stroke='#0d7a0d' strokeWidth='1.4' />
        <path d='M889.5 152v9h11v-9' stroke='#c01010' />
    </svg>
)

const windowControls = (size, color) =>
    [
        ['Minimize', 'M1 5.5h8'],
        ['Restore', 'M1.5 3.5h5v5h-5zM3.5 3V1.5h5v5H7'],
        ['Close', 'M1.5 1.5l7 7M8.5 1.5l-7 7']
    ].map(([label, d]) => ({
        label,
        icon: (
            <svg width={size} height={size} viewBox='0 0 10 10' fill='none' stroke={color} aria-hidden='true'>
                <path d={d} />
            </svg>
        )
    }))

export default function App() {
    return (
        <Window>
            <GlobalStyle />
            <AppButton aria-label='Application menu'>
                <svg width='34' height='34' viewBox='0 0 34 34' fill='none'>
                    <circle cx='17' cy='17' r='16' fill='#c9cdd0' stroke='#7d8790' />
                    <circle cx='17' cy='17' r='14' fill='#3a4f49' />
                    <circle cx='17' cy='15' r='12' fill='#5a716a' fillOpacity='.5' />
                    <path d='M8 14l9-7 9 7' stroke='#e6ece9' strokeWidth='1.6' />
                    <path d='M10.5 13v12.5h13V13' stroke='#e6ece9' strokeWidth='1.4' />
                    <path d='M13 12h8M13 16h8' stroke='#b9c6c0' />
                    <path d='M13 18v5h3zM15 23l6-6v6z' fill='#4b8a34' stroke='#7cc243' strokeWidth='1.2' />
                </svg>
            </AppButton>

            <TitleBar>
                <QuickAccess>
                    {Object.entries(quickIcons).map(([label, art]) => (
                        <QuickButton key={label} aria-label={label}>
                            <Svg size={14}>{art}</Svg>
                        </QuickButton>
                    ))}
                    <QuickButton aria-label='Undo'>
                        <Svg size={14}>
                            <path d='M3 8c3-5 11-5 11 1 0 3-2 5-5 5' stroke='#1c67b3' strokeWidth='2.6' />
                            <path d='M0 4v8h8z' fill='#1c67b3' />
                        </Svg>
                    </QuickButton>
                    <QuickButton $width='9px' aria-label='Undo list'><Caret /></QuickButton>
                    <QuickButton aria-label='Redo'>
                        <Svg size={14}>
                            <path d='M13 8C10 3 2 3 2 9c0 3 2 5 5 5' stroke='#7fb0cf' strokeWidth='2.6' />
                            <path d='M16 4v8H8z' fill='#7fb0cf' />
                        </Svg>
                    </QuickButton>
                    <QuickButton $width='9px' aria-label='Redo list'><Caret /></QuickButton>
                    <Combo $width='126px'>
                        <Svg w={18} size={13}>{gear(9, 9, 8, '#1766b8')}</Svg>
                        <select aria-label='Workspace'>
                            <option>Drafting and Annotation</option>
                        </select>
                        <Caret />
                    </Combo>
                    <Combo $width='176px'>
                        <Svg size={14}>
                            <path d='M8 1a5 5 0 0 1 3 9v2H5v-2a5 5 0 0 1 3-9z' fill='#fbe96b' stroke='#a08a2a' />
                            <path d='M6 13h4v2H6z' fill='#666' />
                        </Svg>
                        <Svg size={14}>
                            <path d='M8 0v16M0 8h16M3 3l10 10M13 3L3 13' stroke='#8a7a00' />
                            <circle cx='8' cy='8' r='4' fill='#ffee3a' stroke='#a89400' />
                        </Svg>
                        <Svg size={14}>
                            <path d='M5 2h9v12H5z' fill='#e4e4e4' />
                            <path d='M2 6h8M6 3v8M3 9l6-5M7 11h6' stroke='#b4b4b4' />
                        </Svg>
                        <Svg size={14}>
                            <path d='M2 8h7v7H2z' fill='#f0b24a' stroke='#8a5d1c' />
                            <path d='M8 8V4a3 3 0 0 1 6 0v4' stroke='#555' strokeWidth='1.6' />
                        </Svg>
                        <Svg size={14}>
                            <path d='M3 3h11v11H3z' fill='#fff' stroke='#333' />
                        </Svg>
                        <select aria-label='Layer'>
                            <option>0</option>
                        </select>
                        <Caret />
                    </Combo>
                    <QuickButton $on aria-label='Layers'>
                        <Svg size={14}>
                            <path d='M4 3h10l-3 3H1zM4 7h10l-3 3H1zM4 11h8l-3 3H1z' fill='#fff' stroke='#555' />
                            <path d='M8 8h7l-2 3v4h-2v-4z' fill='#333' />
                        </Svg>
                    </QuickButton>
                    <QuickButton $width='29px' aria-label='Customize'>
                        <svg width='7' height='8' viewBox='0 0 7 8'>
                            <path d='M1 0h5v1H1zM1 2h5v1H1zM1 4h5L3.5 7z' fill='#111' />
                        </svg>
                    </QuickButton>
                </QuickAccess>
                <AppTitle>FRAMECAD Steelwise 1.0x64 Professional &nbsp;- [SpaceStation_2000*]</AppTitle>
                {windowControls(10, '#222').map(({ label, icon }) => (
                    <WindowButton key={label} aria-label={label}>{icon}</WindowButton>
                ))}
            </TitleBar>

            <MenuBar>
                {menus.map((name, i) => (
                    <button key={i}>{name}</button>
                ))}
            </MenuBar>

            <RibbonTabs>
                {ribbonTabs.map((name) => (
                    <RibbonTab key={name} $active={name === 'Help'}>{name}</RibbonTab>
                ))}
            </RibbonTabs>

            <Ribbon>
                <RibbonPanel>
                    <PanelBody>
                        <BigButton $width='36px'>
                            <Svg w={28}>
                                <circle cx='14' cy='14' r='11.5' fill='#0f57b4' />
                                <path d='M10 11c0-5 8-5 8-1 0 3-4 3-4 6M14 18v3' stroke='#fff' strokeWidth='2.6' />
                            </Svg>
                            Help
                        </BigButton>
                        <BigButton $width='86px'>
                            <Svg w={28}>
                                <path d='M2 4h11v18H2zM13 4h11v18H13z' fill='#fff' stroke='#4d535c' strokeWidth='1.4' />
                                <path d='M5 8h6M5 11h6M5 14h6M5 17h6M15 8h6M15 11h6M15 14h6M15 17h4' stroke='#666c75' />
                                {person(22, 16)}
                            </Svg>
                            FRAMECAD<br />Steelwise User Guide
                        </BigButton>
                        <LinkList>
                            <li>
                                <RibbonLink href='#developer'>
                                    <Svg size={14}>
                                        <circle cx='7' cy='7' r='6.5' fill={BLUE} />
                                        <path d='M5 6c0-3 4-3 4-1 0 2-2 1-2 4' stroke='#fff' strokeWidth='1.4' />
                                        {gear(12, 12, 3.6, INK)}
                                    </Svg>
                                    Developer Help
                                </RibbonLink>
                            </li>
                            <li>
                                <RibbonLink href='#web'>
                                    <Svg size={14}>
                                        <circle cx='7' cy='7' r='6' stroke='#3572b0' />
                                        <path d='M1 7h12M7 1v12M3 3c3 2 6 2 8 0' stroke='#3572b0' />
                                        <circle cx='10' cy='10' r='3.6' fill='#e9f0f6' stroke='#444' />
                                        <path d='M13 13l3 3' stroke='#444' strokeWidth='1.6' />
                                    </Svg>
                                    FRAMECAD Steelwise on the Web
                                </RibbonLink>
                            </li>
                            <li>
                                <RibbonLink href='#about'>
                                    <Svg size={14}>
                                        <circle cx='8' cy='8' r='7.5' fill={BLUE} />
                                        <path d='M8 3v2M8 7v6' stroke='#fff' strokeWidth='2' />
                                    </Svg>
                                    About FRAMECAD Steelwise
                                </RibbonLink>
                            </li>
                        </LinkList>
                    </PanelBody>
                    <PanelName>Help</PanelName>
                </RibbonPanel>

                <RibbonPanel>
                    <PanelBody>
                        <BigButton $width='42px'>
                            <Svg w={28}>
                                <path d='M5 4h17v20H5z' fill='#fff' stroke='#f0a33a' strokeWidth='2' />
                                <path d='M9 2h8v4H9z' fill='#555' />
                                <path d='M8 14l4 4 7-8' stroke='#dd2a20' strokeWidth='3' />
                                {person(23, 17)}
                            </Svg>
                            Send<br />Feedback
                        </BigButton>
                        <BigButton $width='36px'>
                            <Svg w={28}>
                                <path d='M14 1c6 0 9 5 8 9-1 4-4 5-4 9h-8c0-4-3-5-4-9-1-4 2-9 8-9z' fill='#fbd960' />
                                <path d='M14 8v10M11 7h6' stroke='#fff' strokeWidth='2' />
                                <path d='M10 20h8v5h-8z' fill='#8a8f96' />
                            </Svg>
                            Tip of<br />the Day
                        </BigButton>
                        <BigButton $width='50px'>
                            <Svg w={28}>
                                <circle cx='13' cy='12' r='11' fill='#f3f5f8' stroke='#5b6672' strokeWidth='1.4' />
                                <path d='M4 6c3 9 9 14 16 13M22 6C19 15 11 20 5 18M10 1C2 8 3 14 6 20M16 1c8 7 7 12 5 18' stroke='#5b6672' />
                                {gear(23, 21, 5, '#555b63')}
                            </Svg>
                            Benchmark<br />Graphics
                        </BigButton>
                    </PanelBody>
                    <PanelName>Other</PanelName>
                </RibbonPanel>
            </Ribbon>

            <Workspace>
                <ToolStrip $width='27px'>
                    <Grip />
                    <ToolGroups groups={leftTools} />
                    <Grip $tall />
                    <ToolButton aria-label='Regenerate'><Glyph name='refresh' /></ToolButton>
                </ToolStrip>

                <Middle>
                    <DocTabs>
                        <DocTab>Start Page</DocTab>
                        <DocTab $active>
                            SpaceStation_2000*
                            <PlainButton aria-label='Close tab'>
                                <svg width='8' height='8' viewBox='0 0 8 8'><path d='M1 1l6 6M7 1L1 7' stroke='#111' strokeWidth='1.4' /></svg>
                            </PlainButton>
                        </DocTab>
                        <TabFiller>
                            <PlainButton aria-label='New tab'>
                                <svg width='8' height='8' viewBox='0 0 8 8'><path d='M4 0v8M0 4h8' stroke='#111' strokeWidth='1.6' /></svg>
                            </PlainButton>
                        </TabFiller>
                        <PlainButton aria-label='Tab list'><BigCaret /></PlainButton>
                    </DocTabs>

                    <Panes>
                        <CanvasPane>
                            <Viewport>
                                <Station />
                                <ViewTags>
                                    <button>Top</button>
                                    <button>2D Wireframe</button>
                                </ViewTags>
                                <ViewButtons>
                                    {windowControls(8, '#050505').map(({ label, icon }) => (
                                        <button key={label} aria-label={`${label} drawing`}>{icon}</button>
                                    ))}
                                </ViewButtons>
                                <ViewCube>TOP</ViewCube>
                            </Viewport>
                            <LayoutTabs>
                                {layoutNav.map(([label, d]) => (
                                    <NavButton key={label} aria-label={label}>
                                        <svg width='8' height='8' viewBox='0 0 10 10'><path d={d} fill='#111' stroke='#111' strokeWidth='1.4' /></svg>
                                    </NavButton>
                                ))}
                                <svg width='10' height='14' viewBox='0 0 10 14' fill='none'><path d='M2 0l7 13h1V0z' fill='#fff' /><path d='M2 0l7 13' stroke='#222' /></svg>
                                <LayoutTab $active>Model</LayoutTab>
                                <svg width='11' height='14' viewBox='0 0 11 14' fill='none'><path d='M0 0h6L1 14H0z' fill='#fff' /><path d='M7 0L1 13M4 7l4 6' stroke='#222' /></svg>
                                <LayoutTab>Layout1</LayoutTab>
                                <svg width='10' height='14' viewBox='0 0 10 14' fill='none'><path d='M9 0L3 13' stroke='#222' /></svg>
                                <TabFiller />
                                <NavButton aria-label='Scroll down'><BigCaret /></NavButton>
                            </LayoutTabs>
                        </CanvasPane>

                        <Palette>
                            <PaletteTitle>Tool Palettes - All Palettes</PaletteTitle>
                            <PaletteBody>
                                <PaletteTabs>
                                    {paletteTabs.map((name) => (
                                        <PaletteTab key={name} $active={name === 'Modify'}>{name}</PaletteTab>
                                    ))}
                                    <MoreTabs aria-label='More palettes'>
                                        <svg width='3' height='7' viewBox='0 0 3 7'><path d='M1 0h1v1H1zM1 3h1v1H1zM1 6h1v1H1z' fill='#999' /></svg>
                                    </MoreTabs>
                                </PaletteTabs>
                                <PaletteList>
                                    {paletteItems.map(([icon, name]) => (
                                        <li key={name}>
                                            <PaletteItem>
                                                <Glyph name={icon} size={26} />
                                                {name}
                                            </PaletteItem>
                                        </li>
                                    ))}
                                </PaletteList>
                                <PaletteScroll />
                            </PaletteBody>
                        </Palette>
                    </Panes>
                </Middle>

                <ToolStrip $width='24px'>
                    <Grip />
                    <ToolGroups groups={rightTools} />
                </ToolStrip>
            </Workspace>

            <CommandArea>
                <CommandSide>
                    <button aria-label='Close command line'>
                        <svg width='9' height='9' viewBox='0 0 9 9'><path d='M1 1l6 6M7 1L1 7' stroke='#111' strokeWidth='1.6' /></svg>
                    </button>
                    <button aria-label='Command line options'><BigCaret /></button>
                </CommandSide>
                <CommandMain>
                    <Log>{'Fillet:  [Polyline/Radius/Trim/Settings/Multiple]/<Select first entity>:\nCancel\nCommand: _ABOUT'}</Log>
                    <Prompt>
                        Command:
                        <input type='text' />
                    </Prompt>
                </CommandMain>
                <LogScroll />
            </CommandArea>

            <StatusBar>
                <Ready>Ready</Ready>
                <Coordinates>
                    <Svg size={14}>
                        <path d='M8 2v13M1 9h14' stroke='#e02020' strokeWidth='1.6' />
                    </Svg>
                    35.0414,22.7321,0.0000
                </Coordinates>
                {statusIcons.map(({ label, art, text, on, width, dim }) => (
                    <StatusButton key={label} aria-label={label} $on={on} $width={width} $dim={dim}>
                        {text || <Svg w={18}>{art}</Svg>}
                    </StatusButton>
                ))}
            </StatusBar>
        </Window>
    )
}
